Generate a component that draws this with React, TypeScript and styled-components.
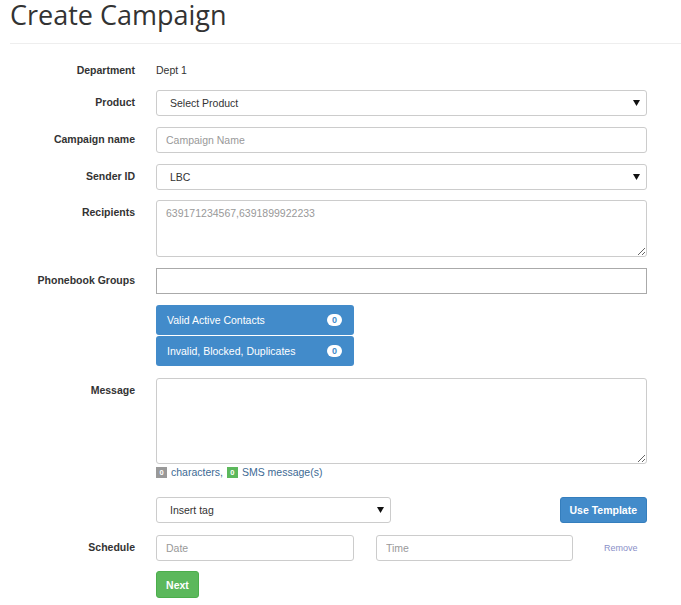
import React from "react";
import styled, { createGlobalStyle } from "styled-components";

const Global = createGlobalStyle`
  html, body { margin: 0; padding: 0; background: #fff; }
  body {
    font-family: "Liberation Sans", Arial, sans-serif;
    font-size: 10.5px;
    line-height: 15px;
    color: #333;
  }
  * { box-sizing: border-box; }
`;

const Page = styled.div`
  width: 681px;
`;

const Title = styled.h1`
  margin: 0;
  padding-left: 10px;
  font-family: "Open Sans", sans-serif;
  font-weight: 400;
  font-size: 27px;
  line-height: 30px;
  color: #333;
`;

const Divider = styled.div`
  margin: 13px 0 14px 10px;
  height: 1px;
  background: #eee;
`;

const Row = styled.div<{ $mb?: number }>`
  display: grid;
  grid-template-columns: 135px 491px;
  column-gap: 21px;
  margin-bottom: ${(p) => (p.$mb ?? 11)}px;
`;

const Label = styled.div`
  text-align: right;
  font-weight: bold;
  padding-top: 5px;
  line-height: 15px;
`;

const Static = styled.div`
  padding-top: 5px;
  line-height: 15px;
  min-height: 21px;
`;

const Field = styled.div`
  display: flex;
  flex-direction: column;
`;

const Input = styled.input<{ $w?: number }>`
  width: ${(p) => (p.$w ? `${p.$w}px` : "100%")};
  height: 26px;
  padding: 0 9px;
  border: 1px solid #ccc;
  border-radius: 3px;
  font-family: inherit;
  font-size: 10.5px;
  color: #555;
  outline: none;
  &::placeholder { color: #999; }
`;

const TagInput = styled.div`
  width: 100%;
  height: 26px;
  border: 1px solid #aaa;
  background: #fff;
`;

const TextArea = styled.textarea<{ $h: number }>`
  display: block;
  width: 100%;
  height: ${(p) => p.$h}px;
  padding: 5px 9px;
  border: 1px solid #ccc;
  border-radius: 3px;
  font-family: inherit;
  font-size: 10.5px;
  line-height: 15px;
  color: #555;
  outline: none;
  &::placeholder { color: #999; }
`;

const SelectBox = styled.div<{ $w?: number }>`
  display: flex;
  align-items: center;
  justify-content: space-between;
  width: ${(p) => (p.$w ? `${p.$w}px` : "100%")};
  height: 26px;
  padding: 0 6px 0 13px;
  border: 1px solid #ccc;
  border-radius: 3px;
  color: #333;
  background: #fff;
`;

const Arrow = () => (
  <svg width="7" height="6" viewBox="0 0 7 6">
    <polygon points="0,0 7,0 3.5,6" fill="#111" />
  </svg>
);

const ListGroup = styled.div`
  display: flex;
  flex-direction: column;
  gap: 1px;
  width: 198px;
`;

const ListItem = styled.div`
  display: flex;
  align-items: center;
  justify-content: space-between;
  height: 30px;
  padding: 0 12px 0 11px;
  background: #428bca;
  color: #fff;
  border-radius: 3px;
`;

const Pill = styled.span`
  display: inline-flex;
  align-items: center;
  justify-content: center;
  min-width: 15px;
  height: 12px;
  padding: 0 4px;
  border-radius: 6px;
  background: #fff;
  color: #428bca;
  font-size: 9px;
  font-weight: bold;
`;

const Counter = styled.div`
  display: flex;
  align-items: center;
  margin-top: 1px;
  line-height: 15px;
  color: #3d6a94;
`;

const CountBox = styled.span<{ $bg: string }>`
  display: inline-flex;
  align-items: center;
  justify-content: center;
  width: 11px;
  height: 11px;
  margin-right: 4px;
  background: ${(p) => p.$bg};
  color: #fff;
  font-size: 7.5px;
  font-weight: bold;
`;

const Gap = styled.span`
  display: inline-block;
  width: 4px;
`;

const SplitRow = styled.div`
  display: flex;
  align-items: center;
  justify-content: space-between;
`;

const Button = styled.button<{ $variant: "primary" | "success" }>`
  height: 26px;
  padding: 0 9px;
  border-radius: 3px;
  border: 1px solid ${(p) => (p.$variant === "primary" ? "#357ebd" : "#4cae4c")};
  background: ${(p) => (p.$variant === "primary" ? "#428bca" : "#5cb85c")};
  color: #fff;
  font-family: inherit;
  font-size: 10.5px;
  font-weight: bold;
  cursor: pointer;
`;

const NextButton = styled(Button)`
  width: 43px;
  height: 27px;
  padding: 0;
`;

const ScheduleRow = styled.div`
  display: flex;
  align-items: center;
  gap: 22px;
`;

const RemoveLink = styled.a`
  margin-left: 9px;
  font-size: 9px;
  color: #8a90c8;
  text-decoration: none;
`;

export default function App() {
  return (
    <Page>
      <Global />
      <Title>Create Campaign</Title>
      <Divider />

      <Row $mb={11}>
        <Label>Department</Label>
        <Static>Dept 1</Static>
      </Row>

      <Row>
        <Label>Product</Label>
        <SelectBox>
          <span>Select Product</span>
          <Arrow />
        </SelectBox>
      </Row>

      <Row>
        <Label>Campaign name</Label>
        <Input placeholder="Campaign Name" />
      </Row>

      <Row $mb={10}>
        <Label>Sender ID</Label>
        <SelectBox>
          <span>LBC</span>
          <Arrow />
        </SelectBox>
      </Row>

      <Row $mb={11}>
        <Label>Recipients</Label>
        <TextArea $h={57} placeholder="639171234567,6391899922233" />
      </Row>

      <Row $mb={11}>
        <Label>Phonebook Groups</Label>
        <TagInput />
      </Row>

      <Row $mb={12}>
        <div />
        <ListGroup>
          <ListItem>
            <span>Valid Active Contacts</span>
            <Pill>0</Pill>
          </ListItem>
          <ListItem>
            <span>Invalid, Blocked, Duplicates</span>
            <Pill>0</Pill>
          </ListItem>
        </ListGroup>
      </Row>

      <Row $mb={17}>
        <Label>Message</Label>
        <Field>
          <TextArea $h={86} />
          <Counter>
            <CountBox $bg="#999">0</CountBox>
            characters,
            <Gap />
            <CountBox $bg="#5cb85c">0</CountBox>
            SMS message(s)
          </Counter>
        </Field>
      </Row>

      <Row $mb={12}>
        <div />
        <SplitRow>
          <SelectBox $w={235}>
            <span>Insert tag</span>
            <Arrow />
          </SelectBox>
          <Button $variant="primary">Use Template</Button>
        </SplitRow>
      </Row>

      <Row $mb={10}>
        <Label>Schedule</Label>
        <ScheduleRow>
          <Input $w={198} placeholder="Date" />
          <Input $w={197} placeholder="Time" />
          <RemoveLink href="#">Remove</RemoveLink>
        </ScheduleRow>
      </Row>

      <Row $mb={0}>
        <div />
        <div>
          <NextButton $variant="success">Next</NextButton>
        </div>
      </Row>
    </Page>
  );
}
